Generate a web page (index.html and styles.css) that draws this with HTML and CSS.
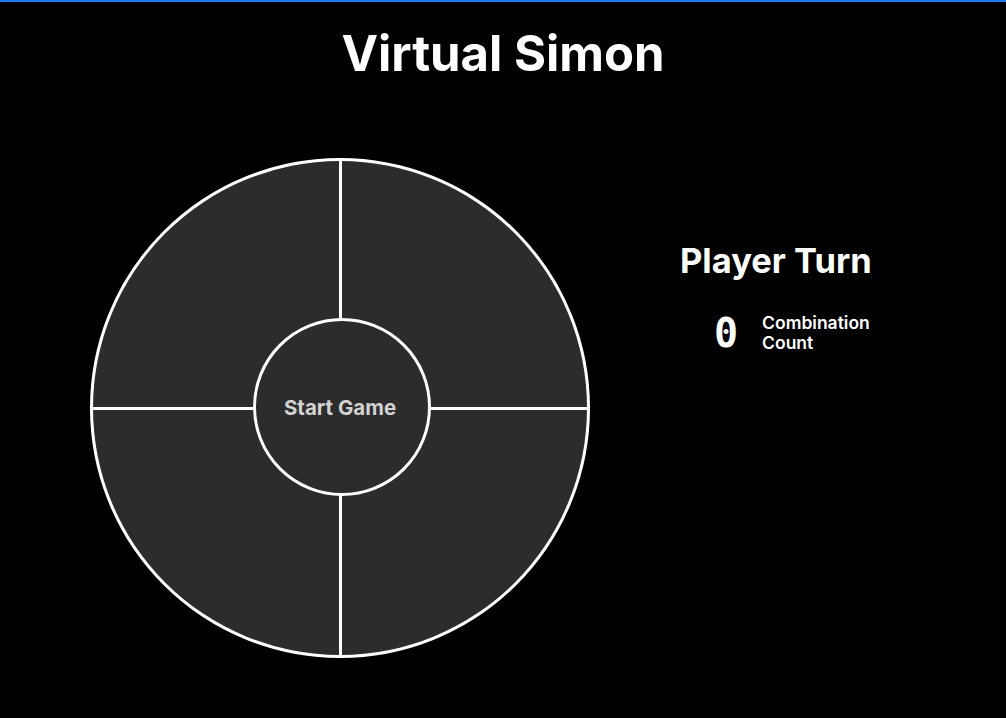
FILE: index.html
```html
<!DOCTYPE html>
<html lang="en">
<head>
<meta charset="utf-8">
<title>Virtual Simon</title>
<link rel="stylesheet" href="styles.css">
</head>
<body>
<div class="topbar"></div>
<h1 class="title">Virtual Simon</h1>
<main class="main">
  <div class="board">
    <div class="pad"></div>
    <div class="pad"></div>
    <div class="pad"></div>
    <div class="pad"></div>
    <button class="start">Start Game</button>
  </div>
  <section class="panel">
    <h2 class="turn">Player Turn</h2>
    <div class="counter">
      <span class="count">0</span>
      <span class="count-label">Combination<br>Count</span>
    </div>
  </section>
</main>
</body>
</html>
```

FILE: styles.css
```css
html, body {
  margin: 0;
  padding: 0;
  background: #000;
  color: #fff;
  font-family: Inter, "Noto Sans", sans-serif;
}
.topbar {
  height: 2px;
  background: #1f7af0;
}
.title {
  margin: 22px 0 0;
  font-size: 49px;
  line-height: 59px;
  font-weight: 700;
  text-align: center;
}
.main {
  display: flex;
  align-items: flex-start;
  padding-left: 90px;
  margin-top: 75px;
}
.board {
  position: relative;
  width: 494px;
  height: 494px;
  border: 3px solid #fff;
  border-radius: 50%;
  background: #fff;
  overflow: hidden;
  display: grid;
  grid-template-columns: 1fr 1fr;
  grid-template-rows: 1fr 1fr;
  gap: 3px;
}
.pad {
  background: #2c2c2c;
}
.start {
  position: absolute;
  left: 50%;
  top: 50%;
  width: 178px;
  height: 178px;
  margin: -90px 0 0 -87px;
  box-sizing: border-box;
  border: 3px solid #fff;
  border-radius: 50%;
  background: #2c2c2c;
  color: #d2d2d2;
  font-family: Inter, "Noto Sans", sans-serif;
  font-size: 20.5px;
  font-weight: 700;
  padding: 0 4px 0 0;
  cursor: pointer;
}
.panel {
  margin-left: 90px;
  margin-top: 83px;
  display: flex;
  flex-direction: column;
  align-items: flex-start;
}
.turn {
  margin: 0;
  font-size: 34.5px;
  line-height: 40px;
  font-weight: 700;
}
.counter {
  display: flex;
  align-items: center;
  margin-top: 32px;
  margin-left: 34px;
  gap: 24px;
}
.count {
  font-family: "DejaVu Sans Mono", monospace;
  font-size: 40px;
  font-weight: 700;
  line-height: 40px;
}
.count-label {
  font-size: 17.5px;
  line-height: 20px;
  font-weight: 600;
}
```
